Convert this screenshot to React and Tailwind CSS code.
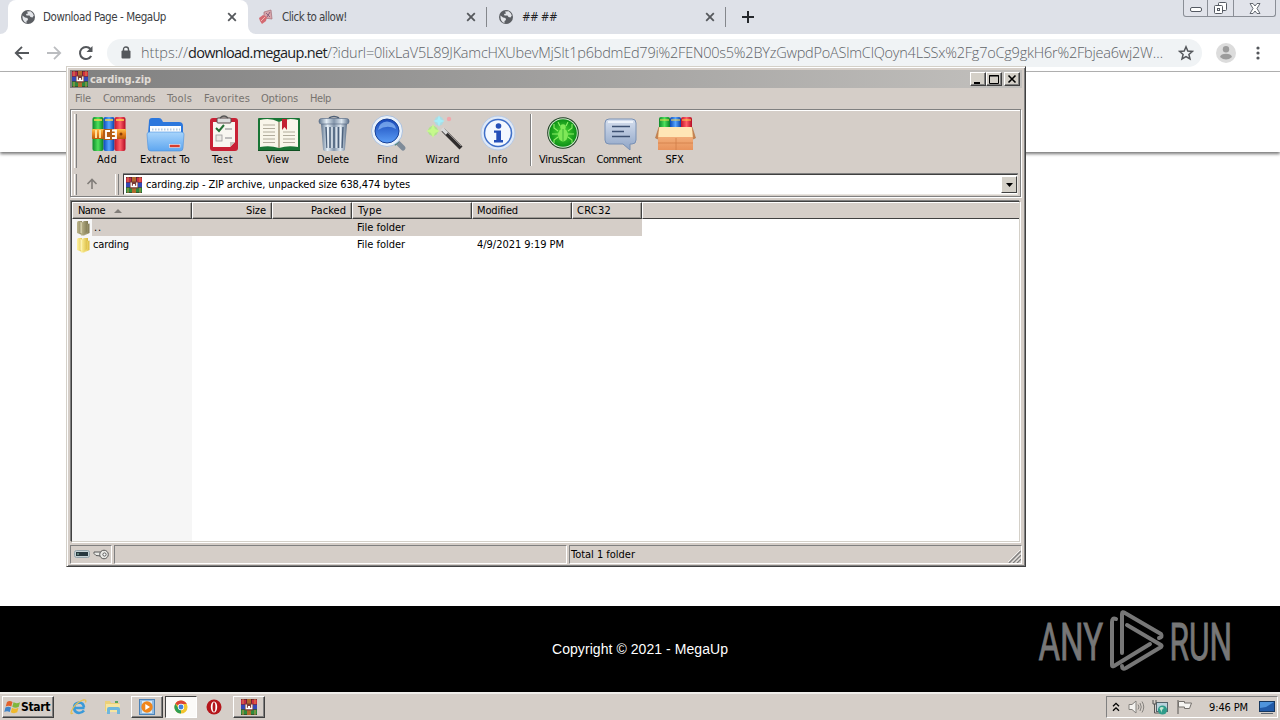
import React, { useLayoutEffect, useRef, useState } from "react";

const UI = "font-['DejaVu_Sans_Condensed','DejaVu_Sans',sans-serif] [font-stretch:condensed]";

// Text whose tracking is adjusted so that it takes up exactly `w` pixels.
// `flat` leaves out the small padding that lowers the baseline of interface labels.
function Fit({ w, className = "", flat = false, children }) {
  const ref = useRef(null);
  const [spacing, setSpacing] = useState(0);
  useLayoutEffect(() => {
    const el = ref.current;
    const n = el.textContent.length;
    setSpacing((w - el.getBoundingClientRect().width) / n);
  }, [w]);
  return (
    <span ref={ref} className={"inline-block shrink-0 whitespace-pre " + (flat ? "" : "pt-[2px] ") + className} style={{ letterSpacing: spacing + "px" }}>
      {children}
    </span>
  );
}

function Globe() {
  return (
    <svg width="16" height="16" viewBox="0 0 16 16">
      <circle cx="8" cy="8" r="7" fill="#5b5e63" />
      <path d="M2.5 6.5 L5 8.5 L7.5 9 L8 11 L6.5 12 L6.5 14 Q2 12.5 2.5 6.5Z M7 2.5 L10.5 2.2 Q13 3.5 13.8 6.5 L12.5 8.5 L10.5 8 L9.5 6.5 L6.5 6.5 L6 5 L8 4.5Z" fill="#e4e6ea" />
    </svg>
  );
}

function Cross() {
  return (
    <svg width="10" height="10" viewBox="0 0 10 10" stroke="#55585c" strokeWidth="1.8">
      <path d="M1.2 1.2 L8.8 8.8 M8.8 1.2 L1.2 8.8" />
    </svg>
  );
}

function Books({ size = 16 }) {
  return (
    <svg width={size} height={size} viewBox="0 0 16 16">
      <rect x="0" y="0" width="16" height="16" fill="#3a2320" />
      <rect x="0" y="0.5" width="5" height="5" fill="#c22a48" />
      <rect x="5.5" y="0.5" width="5" height="5" fill="#a82350" />
      <rect x="11" y="0.5" width="5" height="5" fill="#cf3040" />
      <rect x="0" y="5.7" width="16" height="4.6" fill="#3547b5" />
      <rect x="0" y="10.6" width="16" height="4.9" fill="#2d8a3c" />
      <rect x="6" y="0" width="4" height="16" fill="#b06a2c" />
      <rect x="4" y="4.5" width="8" height="7" fill="#7a3c34" />
      <path d="M5.2 5.5 V9.5 H7.6 V7 M8.4 7 V9.5 H10.8 V5.5" fill="none" stroke="#fff" strokeWidth="1.3" />
      <path d="M2 0 V5 M14 0 V5 M2 11 V16 M14 11 V16" stroke="#e9a04a" strokeWidth="0.8" />
    </svg>
  );
}

function Defs() {
  const g = (id, stops, v) => (
    <linearGradient id={id} x1="0" y1="0" x2={v ? 0 : 1} y2={v ? 1 : 0}>
      {stops.map((s, i) => (
        <stop key={i} offset={i / (stops.length - 1)} stopColor={s} />
      ))}
    </linearGradient>
  );
  return (
    <svg width="0" height="0" className="absolute">
      <defs>
        {g("green", ["#0d8a2a", "#4fe05c", "#078022"])}
        {g("blue", ["#0b49b8", "#57a5ff", "#0a3fa5"])}
        {g("red", ["#c3132b", "#ff6068", "#b50b24"])}
        {g("belt", ["#ffc14a", "#e8821d", "#b85a0c"], true)}
        {g("folder", ["#a9d5fb", "#5ea6f0"], true)}
        {g("metal", ["#5f758e", "#e3edf5", "#8496ab", "#dde7f0", "#5c7089"])}
        {g("lens", ["#1747b8", "#5a9cf5"], true)}
        {g("note", ["#d6dfee", "#8ea4c6"], true)}
        {g("box", ["#f6b884", "#e8935c"], true)}
        {g("yellow", ["#fff3a0", "#d9b93c"])}
        {g("olive", ["#bdb68c", "#7d7750"])}
        <radialGradient id="virus">
          <stop offset="0" stopColor="#4fdc35" />
          <stop offset="1" stopColor="#0c8f16" />
        </radialGradient>
      </defs>
    </svg>
  );
}

const art = {
  Add: (
    <>
      <rect x="9.5" y="3" width="11" height="34" rx="2" fill="url(#green)" />
      <rect x="20.5" y="3" width="11" height="34" rx="2" fill="url(#blue)" />
      <rect x="31.5" y="3" width="11" height="34" rx="2" fill="url(#red)" />
      <path d="M11 6 H19 M22 6 H30 M33 6 H41" stroke="#ffd94d" strokeWidth="1.6" />
      <rect x="9" y="15" width="34" height="10" rx="1" fill="url(#belt)" />
      <path d="M13 16 V24 M17 16 V24" stroke="#ffe09a" strokeWidth="2" />
      <rect x="20" y="15" width="11" height="11" rx="2" fill="#b45c15" />
      <path d="M27 17 H23 V24 H27 M29 16.5 H33 V24 H29 M29 20 H32" fill="none" stroke="#fff" strokeWidth="1.8" />
      <circle cx="38" cy="20" r="1.5" fill="#8a3d08" />
    </>
  ),
  "Extract To": (
    <>
      <path d="M8 7 Q8 4 11 4 H18 Q20 4 21 6 L22 8 H38 Q42 8 42 12 V20 H7Z" fill="#2b77dd" />
      <path d="M9 12 H40 V22 H9Z" fill="#fafdff" />
      <path d="M11 15.5 H39" stroke="#b8cbe0" strokeWidth="2" strokeDasharray="1.5 1.5" />
      <path d="M6 20 Q6 18 9 18 H40 Q43 18 43 20 L42 34 Q42 37 39 37 H10 Q7 37 7 34Z" fill="url(#folder)" stroke="#4a90df" strokeWidth="0.6" />
      <rect x="28.5" y="30.5" width="10.5" height="3" fill="#d93c2d" stroke="#fff" strokeWidth="0.5" />
    </>
  ),
  Test: (
    <>
      <rect x="11" y="4" width="28" height="33" rx="3" fill="#c92135" />
      <path d="M14 8 H36 V28 L31 33 H14Z" fill="#f8f6f0" />
      <path d="M36 28 L31 33 V28Z" fill="#c9c4bc" />
      <rect x="18" y="4" width="14" height="5" rx="1" fill="#dcdcdc" stroke="#5b4a4a" />
      <path d="M21 4 Q25 0 29 4" fill="none" stroke="#555" strokeWidth="1.2" />
      <path d="M17 14 L20 17 L25 11" fill="none" stroke="#236f35" strokeWidth="2" />
      <path d="M26 15 H33 M26 24 H33" stroke="#aaa" strokeWidth="1.5" />
      <rect x="17" y="21" width="6" height="6" fill="#ebe9e4" stroke="#999" strokeWidth="0.8" />
    </>
  ),
  View: (
    <>
      <rect x="4" y="4" width="42" height="33" rx="1" fill="#197535" />
      <path d="M6 6 Q16 3 25 8 Q34 3 44 6 V33 Q34 31 25 34 Q16 31 6 33Z" fill="#f9f6ea" />
      <path d="M25 8 V34" stroke="#b0a68c" strokeWidth="1.8" />
      <path d="M9 11 H21 M9 14.5 H21 M9 18 H21 M9 21.5 H21 M9 25 H21 M9 28.5 H21 M29 18 H41 M29 21.5 H41 M29 25 H41 M29 28.5 H41" stroke="#a8a493" strokeWidth="0.9" />
      <path d="M28 5 H33 V16 L30.5 13 L28 16Z" fill="#c32233" />
      <path d="M4 36.5 H46" stroke="#0e4f21" fill="none" />
    </>
  ),
  Delete: (
    <>
      <path d="M20 4 Q25 1 30 4" fill="none" stroke="#4d5f75" strokeWidth="1.6" />
      <path d="M12 10 H38 L36 35 Q36 37 33 37 H17 Q14 37 14 35Z" fill="url(#metal)" />
      <path d="M17 13 L18 34 M21 13 V34 M25 13 V34 M29.5 13 V34 M34 13 L33 34" stroke="#4c617c" strokeWidth="1.5" />
      <path d="M19 13 V34 M23 13 V34 M27.2 13 V34 M31.6 13 V34" stroke="#eef4fa" strokeWidth="1" />
      <rect x="10" y="4.5" width="30" height="5.5" rx="2.5" fill="url(#metal)" stroke="#5b6f88" strokeWidth="0.7" />
    </>
  ),
  Find: (
    <>
      <path d="M31 26 L39 34" stroke="#7e8b99" strokeWidth="5" strokeLinecap="round" />
      <path d="M30 27 L33 30" stroke="#3b7f6f" strokeWidth="5" />
      <circle cx="23" cy="17" r="15.5" fill="#e9f1fa" stroke="#9eb8dc" strokeWidth="0.8" />
      <circle cx="23" cy="17" r="12" fill="url(#lens)" stroke="#174096" />
      <path d="M14 16 Q15 8 23 7.5 Q31 8 32 15 Q23 10 14 16Z" fill="#8dbaf6" opacity="0.7" />
    </>
  ),
  Wizard: (
    <>
      <path d="M24 16 L42 34" stroke="#302d2d" strokeWidth="4.2" />
      <path d="M23 14.5 L28 19.5" stroke="#d8d8d8" strokeWidth="3.4" />
      <path d="M29 19 L42 32" stroke="#8f8b8b" strokeWidth="1" />
      <circle cx="20" cy="7" r="4.5" fill="#8de5f5" opacity="0.6" />
      <path d="M20 1 L21.5 5.5 L26 7 L21.5 8.5 L20 13 L18.5 8.5 L14 7 L18.5 5.5Z" fill="#a6edf8" />
      <circle cx="14" cy="17" r="5" fill="#9df06b" opacity="0.65" />
      <path d="M14 10 L16 15 L21 17 L16 19 L14 24 L12 19 L7 17 L12 15Z" fill="#c6f98c" />
      <circle cx="30" cy="5" r="2.2" fill="#f79ca4" opacity="0.8" />
    </>
  ),
  Info: (
    <>
      <circle cx="24" cy="19" r="17" fill="#dfe9f7" stroke="#b6c9e5" />
      <circle cx="24" cy="19" r="13.5" fill="#f3f8ff" stroke="#3f6fc8" strokeWidth="1.5" />
      <circle cx="24.5" cy="12" r="2.8" fill="#244fb8" />
      <path d="M20 16.5 H27 V26 H29 V28.5 H20 V26 H22.3 V18.8 H20Z" fill="#244fb8" />
    </>
  ),
  VirusScan: (
    <>
      <circle cx="25" cy="19" r="15.8" fill="#1b3e20" />
      <circle cx="25" cy="19" r="14.8" fill="#d3ecd0" />
      <circle cx="25" cy="19" r="13.8" fill="url(#virus)" />
      <path d="M20 17 L16 14 V10 M20 20 H14 M20 23 L16 26 V29 M30 17 L34 14 V10 M30 20 H36 M30 23 L34 26 V29 M22 12 L20 8 M28 12 L30 8" stroke="#8cf066" strokeWidth="1.1" fill="none" />
      <ellipse cx="25" cy="21" rx="5" ry="6.5" fill="#7fe858" />
      <circle cx="25" cy="13" r="2.8" fill="#7fe858" />
      <path d="M25 15 V27" stroke="#2daa2b" strokeWidth="0.8" />
    </>
  ),
  Comment: (
    <>
      <path d="M14 5 H37 Q41 5 41 9 V26 Q41 30 37 30 H35 V36 L28 30 H14 Q10 30 10 26 V9 Q10 5 14 5Z" fill="url(#note)" stroke="#7890b4" />
      <path d="M13 8 H38" stroke="#eef3fa" strokeWidth="2" />
      <path d="M17 12.5 H35 M17 17.5 H29 M17 22.5 H35" stroke="#3d5172" strokeWidth="1.6" />
    </>
  ),
  SFX: (
    <>
      <rect x="8" y="3" width="11" height="18" rx="2" fill="url(#green)" />
      <rect x="19" y="3" width="11" height="18" rx="2" fill="url(#blue)" />
      <rect x="30" y="3" width="11" height="18" rx="2" fill="url(#red)" />
      <path d="M9 6 H18 M20 6 H29 M31 6 H40" stroke="#ffd94d" strokeWidth="1.2" />
      <path d="M7 17 H42 V36 H7Z" fill="url(#box)" />
      <path d="M8 13 H41 L43 23 H6Z" fill="#ffe6b5" />
      <path d="M8 13 L4.5 24 L7 25 M41 13 L44.5 24 L42 25" fill="#c98450" stroke="#b0703e" strokeWidth="0.6" />
      <path d="M25 24 V36 M7 29 H42" stroke="#d07f49" strokeWidth="0.8" />
    </>
  ),
};

function Tool({ name, tw, className }) {
  return (
    <div className={"flex shrink-0 flex-col items-center " + className}>
      <svg width="48" height="40" viewBox="0 0 48 40" className="shrink-0 overflow-visible">{art[name]}</svg>
      <Fit w={tw} className="-mt-[3px] h-[16px] text-[11px] leading-[14px]">{name}</Fit>
    </div>
  );
}

function CaptionButton({ children, className = "" }) {
  return (
    <div className={"flex h-[14px] w-4 items-center justify-center border border-t-white border-r-[#404040] border-b-[#404040] border-l-white bg-[#d4d0c8] shadow-[inset_-1px_-1px_0_#808080] " + className}>
      <svg width="12" height="11" viewBox="0 0 12 11" stroke="#000" fill="none">{children}</svg>
    </div>
  );
}

function Head({ className = "", children }) {
  return (
    <div className={"flex h-[17px] shrink-0 items-center border-t border-l border-t-white border-l-white border-r border-b border-r-[#404040] border-b-[#404040] px-[5px] shadow-[inset_-1px_-1px_0_#a09c96] " + className}>
      {children}
    </div>
  );
}

function Folder({ fill }) {
  return (
    <svg width="16" height="16" viewBox="0 0 16 16" className="shrink-0">
      <path d="M1 2.5 Q1 1 2.5 1 H6 L8 13 L6 15 L1 13Z" fill={fill} />
      <path d="M5 3 L8 1 H12 V12 L8 15.5 H5Z" fill={fill} />
      <path d="M11 4 L13.5 3.5 V13 L8 15.5 L11 12Z" fill={fill} />
      <path d="M5 2 V13" stroke="#fffbe0" strokeWidth="1" opacity="0.7" />
    </svg>
  );
}

function Archiver() {
  return (
    <div className={"absolute top-[66px] left-[66px] flex h-[501px] w-[960px] flex-col border border-t-[#d4d0c8] border-r-[#404040] border-b-[#404040] border-l-[#d4d0c8] bg-[#d5cec8] p-[3px] text-[11px] text-black shadow-[inset_1px_1px_0_#fff,inset_-1px_-1px_0_#808080] " + UI}>
      <div className="flex h-[18px] shrink-0 items-center bg-linear-to-r from-[#808080] to-[#c2c0bd] pl-[2px]">
        <Books size={16} />
        <Fit w={61} className="ml-[2px] font-bold text-[#e0dcd6]">carding.zip</Fit>
        <div className="ml-auto flex pr-[2px]">
          <CaptionButton><path d="M2 9 H8" strokeWidth="2" /></CaptionButton>
          <CaptionButton><path d="M1.5 1.5 H10.5 V9.5 H1.5Z M1 2 H11" /></CaptionButton>
          <CaptionButton className="ml-[2px]"><path d="M2.5 1.5 L9.5 8.5 M9.5 1.5 L2.5 8.5" strokeWidth="1.6" /></CaptionButton>
        </div>
      </div>
      <div className="flex h-[21px] shrink-0 items-center pl-[5px] text-[#77736f]">
        <Fit w={16}>File</Fit>
        <Fit w={52} className="ml-[12px]">Commands</Fit>
        <Fit w={25} className="ml-[12px]">Tools</Fit>
        <Fit w={46} className="ml-[12px]">Favorites</Fit>
        <Fit w={37} className="ml-[11px]">Options</Fit>
        <Fit w={21} className="ml-[12px]">Help</Fit>
      </div>
      <div className="mr-px flex h-[88px] shrink-0 flex-col border border-[#808080] shadow-[inset_1px_1px_0_#fff,1px_1px_0_#fff]">
        <div className="flex h-[61px] shrink-0 pt-1">
          <div className="ml-[3px] h-[54px] w-[3px] border-r border-l border-l-white border-r-[#808080]" />
          <div className="flex">
            <Tool name="Add" tw={20} className="ml-[3px] w-[54px]" />
            <Tool name="Extract To" tw={50} className="w-[62px]" />
            <Tool name="Test" tw={21} className="w-[53px]" />
            <Tool name="View" tw={23} className="w-[57px]" />
            <Tool name="Delete" tw={32} className="w-[54px]" />
            <Tool name="Find" tw={21} className="w-[55px]" />
            <Tool name="Wizard" tw={34} className="w-[55px]" />
            <Tool name="Info" tw={20} className="w-[56px]" />
            <div className="ml-[4px] h-[52px] w-[2px] border-r border-l border-l-[#808080] border-r-white" />
            <Tool name="VirusScan" tw={46} className="ml-[1px] w-[58px]" />
            <Tool name="Comment" tw={45} className="w-[56px]" />
            <Tool name="SFX" tw={18} className="w-[55px]" />
          </div>
        </div>
        <div className="flex h-[25px] shrink-0 items-start pt-[3px]">
          <div className="ml-[3px] h-[21px] w-[3px] border-r border-l border-l-white border-r-[#808080]" />
          <svg width="16" height="20" viewBox="0 0 16 20" className="ml-[7px]" fill="none" stroke="#817d79" strokeWidth="1.6">
            <path d="M8 15 V6 M3.5 10 L8 5.5 L12.5 10" />
          </svg>
          <div className="ml-[15px] h-[21px] w-[4px] border-r border-l border-l-white border-r-[#808080]" />
          <div className="ml-[4px] flex h-[21px] w-[895px] items-center border border-[#404040] border-r-[#e8e5e0] border-b-[#e8e5e0] bg-white pl-[2px] shadow-[0_-1px_0_#808080]">
            <Books size={16} />
            <Fit w={264} className="ml-[4px]">carding.zip - ZIP archive, unpacked size 638,474 bytes</Fit>
            <div className="ml-auto flex h-[17px] w-4 items-center justify-center border border-t-white border-r-[#404040] border-b-[#404040] border-l-white bg-[#d4d0c8]">
              <svg width="7" height="4" viewBox="0 0 7 4"><path d="M0 0 H7 L3.5 4Z" /></svg>
            </div>
          </div>
        </div>
      </div>
      <div className="mt-[4px] mr-[2px] ml-px flex h-[341px] shrink-0 flex-col border border-t-[#404040] border-r-[#d4d0c8] border-b-[#d4d0c8] border-l-[#404040] bg-white shadow-[-1px_-1px_0_#808080,1px_1px_0_#fff]">
        <div className="flex h-[17px] shrink-0 bg-[#d5cec8]">
          <Head className="w-[120px]"><Fit w={27}>Name</Fit>
            <svg width="8" height="4" viewBox="0 0 8 4" className="ml-[9px]"><path d="M0 4 L4 0 L8 4Z" fill="#817d79" /></svg>
          </Head>
          <Head className="w-20 justify-end"><Fit w={20}>Size</Fit></Head>
          <Head className="w-20 justify-end"><Fit w={35}>Packed</Fit></Head>
          <Head className="w-[120px]"><Fit w={24}>Type</Fit></Head>
          <Head className="w-[100px] pl-[4px]"><Fit w={41}>Modified</Fit></Head>
          <Head className="w-[70px] pl-[4px]"><Fit w={34}>CRC32</Fit></Head>
          <div className="flex-1 border-t border-b border-l border-t-white border-b-[#404040] border-l-white" />
        </div>
        <div className="flex flex-1">
          <div className="flex w-[120px] flex-col bg-[#f6f6f6]">
            <div className="flex h-[17px] items-center bg-[#d5cec8]">
              <div className="flex h-[17px] w-[20px] items-center bg-[#f6f6f6] pl-[4px]"><Folder fill="url(#olive)" /></div>
              <Fit w={8} className="ml-[2px]">..</Fit>
            </div>
            <div className="flex h-[17px] items-center pl-[4px]">
              <Folder fill="url(#yellow)" />
              <Fit w={36} className="ml-[1px]">carding</Fit>
            </div>
          </div>
          <div className="flex w-[450px] flex-col">
            <div className="flex h-[17px] items-center bg-[#d5cec8] pl-[165px]"><Fit w={48}>File folder</Fit></div>
            <div className="flex h-[17px] items-center pl-[165px]">
              <Fit w={48}>File folder</Fit>
              <Fit w={87} className="ml-[72px]">4/9/2021 9:19 PM</Fit>
            </div>
          </div>
        </div>
      </div>
      <div className="mt-[3px] flex h-[19px] shrink-0 gap-[2px]">
        <div className="flex w-[42px] items-center gap-[3px] border border-t-[#808080] border-r-white border-b-white border-l-[#808080] pl-[3px]">
          <svg width="16" height="9" viewBox="0 0 16 9"><rect x="0.5" y="0.5" width="15" height="7" rx="2" fill="#c5d2d6" stroke="#93a4ab" /><rect x="2" y="2" width="12" height="4" fill="#27383f" /><path d="M3 4 H5" stroke="#8fc2b0" /></svg>
          <svg width="16" height="11" viewBox="0 0 16 11" fill="#e8e8e4" stroke="#5a5a5a"><path d="M1 3 H8 V7 L3 6.5 L1 4.5Z" /><circle cx="11" cy="5.5" r="4.3" /><circle cx="11.5" cy="5.5" r="1.6" fill="#fff" /></svg>
        </div>
        <div className="w-[453px] border border-t-[#808080] border-r-white border-b-white border-l-[#808080]" />
        <div className="flex flex-1 items-center border border-t-[#808080] border-r-white border-b-white border-l-[#808080] pl-px">
          <Fit w={64}>Total 1 folder</Fit>
          <svg width="13" height="13" viewBox="0 0 13 13" className="mt-1 ml-auto" strokeWidth="1.4"><path d="M1 13 L13 1 M5 13 L13 5 M9 13 L13 9" stroke="#808080" /><path d="M0 12 L12 0 M4 12.5 L12.5 4 M8 12.5 L12.5 8" stroke="#fff" strokeWidth="0.7" /></svg>
        </div>
      </div>
    </div>
  );
}

function TaskButton({ down, children }) {
  return (
    <div className={"flex h-[22px] w-8 items-center justify-center border " + (down ? "border-t-[#404040] border-r-white border-b-white border-l-[#404040] bg-[#fbfaf8]" : "border-t-white border-r-[#404040] border-b-[#404040] border-l-white shadow-[inset_-1px_-1px_0_#808080]")}>
      {children}
    </div>
  );
}

function Taskbar() {
  return (
    <div className={"flex h-[28px] shrink-0 items-center border-t-2 border-t-[#efedea] bg-[#d5cec8] text-[11px] text-black " + UI}>
      <div className="ml-[2px] flex h-[22px] w-[52px] items-center border border-t-white border-r-[#404040] border-b-[#404040] border-l-white pl-px shadow-[inset_-1px_-1px_0_#808080]">
        <svg width="17" height="16" viewBox="0 0 17 16">
          <path d="M3 3 Q5.5 1 8.5 3 L7.3 7.5 Q4.5 6 1.7 7.5Z" fill="#e2622c" />
          <path d="M9.5 3.3 Q12.5 5 16 3.2 L14.8 7.8 Q11.5 9.5 8.3 7.8Z" fill="#7fb73d" />
          <path d="M1.4 8.5 Q4.3 7 7 8.5 L5.8 13 Q3 11.5 0.3 13Z" fill="#3f84c9" />
          <path d="M8 8.8 Q11 10.5 14.5 8.8 L13.2 13.3 Q10 15 6.8 13.2Z" fill="#efb92d" />
        </svg>
        <Fit w={29} flat className="text-[12px] font-bold">Start</Fit>
      </div>
      <svg width="18" height="18" viewBox="0 0 18 18" className="ml-[16px]" fill="none">
        <path d="M14.5 10 H5 M14 9.5 Q13.5 4.5 9 4.5 Q4 5 4 10 Q4.5 14.5 9 15 Q12 15 14 12.5" stroke="#3a9ad9" strokeWidth="2.6" />
        <path d="M3 15 Q0 17 1.5 13 Q5 5 13 2 Q17 1 15.5 4.5" stroke="#e8c04f" strokeWidth="1.3" />
      </svg>
      <svg width="18" height="18" viewBox="0 0 18 18" className="ml-[16px]">
        <path d="M1 3 H6 L7 5 H15 V13 H1Z" fill="#ecd078" /><path d="M2 6 H16 V14 H2Z" fill="#f6e5a0" /><path d="M3 16 V11 Q3 9 5 9 H14 Q16 9 16 11 V16 H13 V12 H6 V16Z" fill="#6fb7dc" /><path d="M11 4 H14" stroke="#58a55c" strokeWidth="2" />
      </svg>
      <div className="ml-[9px] flex items-center">
        <TaskButton>
          <svg width="16" height="16" viewBox="0 0 16 16"><rect x="0.5" y="0.5" width="15" height="15" fill="#93bce2" stroke="#4b82b8" /><rect x="3" y="2" width="10" height="12" fill="#d8eaf8" /><circle cx="8" cy="8" r="5.7" fill="#f0861c" /><path d="M6.3 5 L11 8 L6.3 11Z" fill="#fff" /></svg>
        </TaskButton>
        <div className="ml-[2px]"><TaskButton down>
          <svg width="14" height="14" viewBox="0 0 16 16"><circle cx="8" cy="8" r="7.5" fill="#f3c52d" /><path d="M8 8 L1.5 4.2 A7.5 7.5 0 0 1 14.5 4.5 H8Z" fill="#dc4437" /><path d="M8 8 L8 15.5 A7.5 7.5 0 0 1 1.5 4.2 L5 9.5Z" fill="#2f9e54" /><circle cx="8" cy="8" r="3.6" fill="#fff" /><circle cx="8" cy="8" r="2.8" fill="#4180dc" /></svg>
        </TaskButton></div>
        <svg width="16" height="16" viewBox="0 0 16 16" className="ml-[9px]"><circle cx="8" cy="8" r="7.5" fill="#b5161b" /><ellipse cx="8" cy="8" rx="3.2" ry="5.6" fill="#fff" /><ellipse cx="8" cy="8" rx="1.4" ry="4.8" fill="#b5161b" /></svg>
        <div className="ml-[11px]"><TaskButton><Books size={16} /></TaskButton></div>
      </div>
      <div className="mr-[2px] ml-auto flex h-[22px] w-[172px] items-center border border-t-[#808080] border-r-white border-b-white border-l-[#808080] pl-[5px]">
        <svg width="8" height="10" viewBox="0 0 8 10" fill="none" stroke="#000" strokeWidth="1.3"><path d="M1 4.3 L4 1.3 L7 4.3 M1 8.8 L4 5.8 L7 8.8" /></svg>
        <svg width="17" height="16" viewBox="0 0 17 16" className="ml-[8px]" fill="none" stroke="#85827e"><path d="M1 5.5 H4 L8 2 V14 L4 10.5 H1Z" fill="#f4f2ef" /><path d="M10 5.5 Q12 8 10 10.5 M12 4 Q14.5 8 12 12 M14 2.5 Q17.5 8 14 13.5" /></svg>
        <svg width="17" height="17" viewBox="0 0 17 17" className="ml-[7px]"><rect x="4.5" y="3.5" width="11" height="9" fill="#b9d2dc" stroke="#54646c" /><path d="M1 1 V5 H4 V1 M2.5 5 V14 H9" fill="none" stroke="#555" /><circle cx="10.5" cy="11" r="4.6" fill="#2f9c8a" /><path d="M7.5 9 Q10 7 12 9 Q9 11 10 14" fill="#bfe5d0" /></svg>
        <svg width="17" height="16" viewBox="0 0 17 16" className="ml-[7px]" fill="#f6f5f2" stroke="#75716d"><path d="M2 1 V15" strokeWidth="1.3" /><path d="M2.5 2.5 H8.5 V4 H15.5 L13.5 9.5 H8.5 V8 H2.5Z" /></svg>
        <Fit w={39} className="ml-[16px]">9:46 PM</Fit>
        <svg width="17" height="15" viewBox="0 0 17 15" className="ml-[11px]"><rect x="0.5" y="1.5" width="15" height="10" fill="#225ba8" stroke="#16375f" /><path d="M1 2 H15 L7 7 L1 8Z" fill="#4f94dc" /><path d="M2 13.5 H14" stroke="#626a73" /></svg>
      </div>
    </div>
  );
}

function Browser() {
  return (
    <>
      <div className={"flex h-[34px] shrink-0 bg-[#dee1e8] text-[11.5px] text-[#3c4043] " + UI}>
        <div className="flex w-2 items-end bg-white"><div className="h-full w-2 rounded-br-[8px] bg-[#dee1e8]" /></div>
        <div className="flex w-[240px] bg-[#dee1e8]"><div className="flex flex-1 items-center rounded-t-[8px] bg-white pl-[12px]">
          <Globe />
          <Fit w={123} className="ml-[7px]">Download Page - MegaUp</Fit>
          <div className="mr-[11px] ml-auto"><Cross /></div>
        </div></div>
        <div className="flex w-[239px] items-center">
          <div className="h-full w-2 bg-white"><div className="h-full rounded-bl-[8px] bg-[#dee1e8]" /></div>
          <svg width="16" height="16" viewBox="0 0 16 16" className="ml-[2px]"><path d="M6 3 L13 1 L14 10 L6 9Z" fill="#d8a5ab" stroke="#a36f77" strokeWidth="0.7" /><path d="M1 9 L5 6 L9 8 L8 12 L4 15 L2 12Z" fill="#d46a72" /><path d="M8 4 L12 8 M12 3 L9 8" stroke="#8d6680" /><path d="M3 12 L7 8" stroke="#f0b7b4" /></svg>
          <Fit w={65} className="ml-[8px]">Click to allow!</Fit>
          <div className="mr-[10px] ml-auto"><Cross /></div>
          <div className="h-5 w-px bg-[#84878c]" />
        </div>
        <div className="flex w-[239px] items-center">
          <div className="ml-[11px]"><Globe /></div>
          <Fit w={35} className="ml-[8px] text-[#202124]">## ##</Fit>
          <div className="mr-[10px] ml-auto"><Cross /></div>
          <div className="h-5 w-px bg-[#84878c]" />
        </div>
        <svg width="14" height="14" viewBox="0 0 14 14" className="mt-[10px] ml-[15px]" stroke="#25282c" strokeWidth="2"><path d="M7 1 V13 M1 7 H13" /></svg>
        <div className="mr-[4px] ml-auto flex h-[17px] w-[93px] rounded-b-[3px] border border-t-0 border-[#8a8e96] bg-[#e1e3ea]">
          <div className="flex w-[24px] items-center justify-center border-r border-[#8a8e96]"><svg width="12" height="6" viewBox="0 0 12 6" className="mt-1"><rect x="0.5" y="0.5" width="11" height="4" rx="1.5" fill="#fff" stroke="#555a63" /></svg></div>
          <div className="flex w-[26px] items-center justify-center border-r border-[#8a8e96]"><svg width="13" height="13" viewBox="0 0 13 13" fill="#fff" stroke="#555a63"><rect x="4.5" y="0.5" width="8" height="8" rx="1" /><rect x="0.5" y="3.5" width="8" height="8" rx="1" /><rect x="3.5" y="6.5" width="2" height="2" /></svg></div>
          <div className="flex flex-1 items-center justify-center"><svg width="12" height="11" viewBox="0 0 12 11" fill="#fff" stroke="#555a63" strokeWidth="0.9"><path d="M1 0.5 H4 L6 3 L8 0.5 H11 L8 5.5 L11 10.5 H8 L6 8 L4 10.5 H1 L4 5.5Z" /></svg></div>
        </div>
      </div>
      <div className="flex h-[38px] shrink-0 items-center border-b border-[#b2b2b2] bg-white">
        <svg width="16" height="16" viewBox="0 0 16 16" className="ml-[14px]" fill="none" stroke="#54575b" strokeWidth="1.9"><path d="M15 8 H2 M8 1.8 L1.8 8 L8 14.2" /></svg>
        <svg width="16" height="16" viewBox="0 0 16 16" className="ml-[16px]" fill="none" stroke="#bbbdc0" strokeWidth="1.8"><path d="M1 8 H14 M8 1.8 L14.2 8 L8 14.2" /></svg>
        <svg width="16" height="16" viewBox="0 0 16 16" className="ml-[16px]" fill="none" stroke="#54575b" strokeWidth="2"><path d="M13.2 11 A6 6 0 1 1 12.5 4" /><path d="M14.5 1 V7 H8.5Z" fill="#54575b" stroke="none" /></svg>
        <div className="ml-[13px] flex h-7 w-[1095px] items-center rounded-full bg-[#f0f3f5] pl-[13px]">
          <svg width="10" height="13" viewBox="0 0 10 13" className="ml-[1px]"><rect x="0.5" y="4.5" width="9" height="8" rx="1" fill="#54575b" /><path d="M2.5 5 V3.5 Q2.5 1 5 1 Q7.5 1 7.5 3.5 V5" fill="none" stroke="#54575b" strokeWidth="1.4" /></svg>
          <div className="ml-[10px] flex font-['Open_Sans','Noto_Sans',sans-serif] text-[14.5px] font-light text-[#5f6368]">
            <Fit w={47} flat>https://</Fit>
            <Fit w={139} flat className="font-normal text-[#202124]">download.megaup.net</Fit>
            <Fit w={836} flat>/?idurl=0lixLaV5L89JKamcHXUbevMjSIt1p6bdmEd79i%2FEN00s5%2BYzGwpdPoASlmClQoyn4LSSx%2Fg7oCg9gkH6r%2Fbjea6wj2W…</Fit>
          </div>
          <svg width="16" height="16" viewBox="0 0 16 16" className="ml-[15px]" fill="none" stroke="#54575b" strokeWidth="1.5"><path d="M8 1.8 L9.8 6 L14.4 6.4 L10.9 9.4 L12 13.9 L8 11.5 L4 13.9 L5.1 9.4 L1.6 6.4 L6.2 6Z" /></svg>
        </div>
        <svg width="20" height="20" viewBox="0 0 20 20" className="ml-[14px]"><circle cx="10" cy="10" r="10" fill="#dcdcdc" /><circle cx="10" cy="6.3" r="3.2" fill="#9c9c9c" /><path d="M4 14 Q5 10.8 10 10.8 Q15 10.8 16 14 Q13 16.5 10 16.5 Q7 16.5 4 14Z" fill="#9c9c9c" /></svg>
        <svg width="4" height="16" viewBox="0 0 4 16" className="ml-[20px]" fill="#54575b"><circle cx="2" cy="3" r="1.6" /><circle cx="2" cy="8" r="1.6" /><circle cx="2" cy="13" r="1.6" /></svg>
      </div>
    </>
  );
}

function Watermark() {
  return (
    <svg width="220" height="80" viewBox="0 0 220 80" className="absolute top-[600px] left-[1030px]" fill="none" stroke="#777" strokeWidth="4">
      <g fill="#777" stroke="#777" strokeWidth="0.9" className="font-['Roboto',sans-serif] font-normal" fontSize="52">
        <text transform="translate(8.5 59.5) scale(0.62 1)" textLength="104" lengthAdjust="spacingAndGlyphs">ANY</text>
        <text transform="translate(139.5 59.5) scale(0.62 1)" textLength="101" lengthAdjust="spacingAndGlyphs">RUN</text>
      </g>
      <g strokeLinejoin="round" strokeLinecap="round">
        <path d="M86 19 Q82 17 82 22 V65 Q82 67 84 66 L120 44" />
        <path d="M92 53 V14 Q92 11 95 13 L131 34 Q133 37 129 38" />
        <path d="M97 25 L131 45 Q132 46 131 47 L96 68 Q92 70 92 66" />
      </g>
    </svg>
  );
}

export default function App() {
  return (
    <div className="relative flex h-[720px] w-[1280px] flex-col overflow-hidden bg-white">
      <Defs />
      <Browser />
      <div className="h-[80px] shrink-0 bg-white shadow-[0_2px_3px_#777]" />
      <div className="flex-1" />
      <div className="flex h-[86px] shrink-0 items-center justify-center bg-black font-['Liberation_Sans',sans-serif] text-[14px] text-white">
        <Fit w={176} flat>Copyright © 2021 - MegaUp</Fit>
      </div>
      <Taskbar />
      <Archiver />
      <Watermark />
    </div>
  );
}
